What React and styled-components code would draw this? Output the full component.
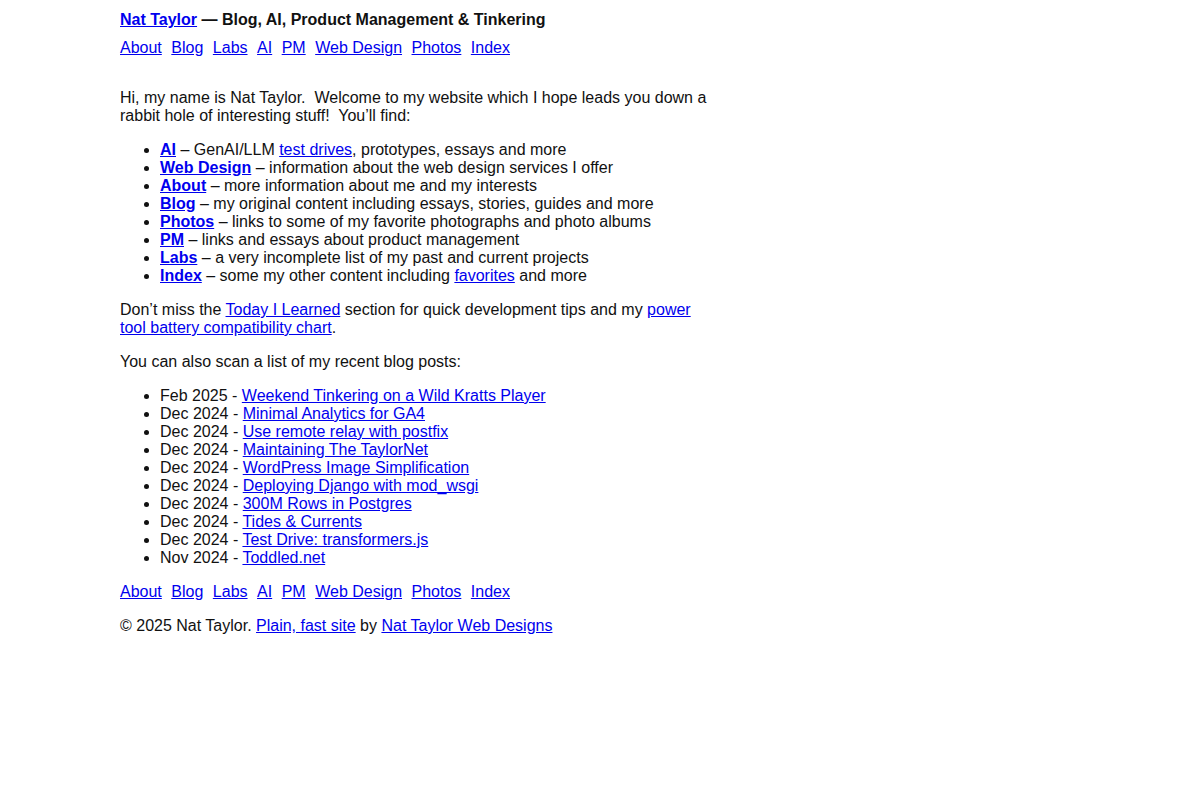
import styled, { createGlobalStyle } from 'styled-components';

const GlobalStyle = createGlobalStyle`
  body {
    margin: 0;
    background: #fff;
    color: #111;
    font-family: "Liberation Sans", Arial, sans-serif;
    font-size: 16px;
    line-height: 18px;
  }

  a {
    color: #0000ee;
    text-decoration: underline;
  }
`;

const Page = styled.div`
  max-width: 960px;
  margin: 0 auto;
  padding-top: 11px;
`;

const Header = styled.header`
  margin-bottom: 10px;
`;

const Title = styled.h1`
  margin: 0;
  font-size: 16px;
  line-height: 18px;
  font-weight: bold;
`;

const Nav = styled.nav`
  display: flex;
  gap: 9.5px;
`;

const Main = styled.main`
  max-width: 600px;
  padding-top: 32px;
`;

const Para = styled.p`
  margin: 0 0 16px;
`;

const List = styled.ul`
  margin: 0 0 16px;
  padding-left: 40px;
`;

const Strong = styled.a`
  font-weight: bold;
`;

const Footer = styled.footer`
  padding-top: 0;
`;

const Copy = styled.p`
  margin: 16px 0 0;
`;

const navLinks = ['About', 'Blog', 'Labs', 'AI', 'PM', 'Web Design', 'Photos', 'Index'];

const sections = [
  ['AI', <> – GenAI/LLM <a href="#">test drives</a>, prototypes, essays and more</>],
  ['Web Design', ' – information about the web design services I offer'],
  ['About', ' – more information about me and my interests'],
  ['Blog', ' – my original content including essays, stories, guides and more'],
  ['Photos', ' – links to some of my favorite photographs and photo albums'],
  ['PM', ' – links and essays about product management'],
  ['Labs', ' – a very incomplete list of my past and current projects'],
  ['Index', <> – some my other content including <a href="#">favorites</a> and more</>]
];

const posts = [
  ['Feb 2025', 'Weekend Tinkering on a Wild Kratts Player'],
  ['Dec 2024', 'Minimal Analytics for GA4'],
  ['Dec 2024', 'Use remote relay with postfix'],
  ['Dec 2024', 'Maintaining The TaylorNet'],
  ['Dec 2024', 'WordPress Image Simplification'],
  ['Dec 2024', 'Deploying Django with mod_wsgi'],
  ['Dec 2024', '300M Rows in Postgres'],
  ['Dec 2024', 'Tides & Currents'],
  ['Dec 2024', 'Test Drive: transformers.js'],
  ['Nov 2024', 'Toddled.net']
];

const SiteNav = () => (
  <Nav>
    {navLinks.map((label) => (
      <a key={label} href="#">{label}</a>
    ))}
  </Nav>
);

const App = () => {
  return (
    <Page>
      <GlobalStyle />
      <Header>
        <Title>
          <a href="#">Nat Taylor</a> — Blog, AI, Product Management &amp; Tinkering
        </Title>
      </Header>
      <SiteNav />
      <Main>
        <Para>
          Hi, my name is Nat Taylor.&nbsp; Welcome to my website which I hope leads you down a
          rabbit hole of interesting stuff!&nbsp; You’ll find:
        </Para>
        <List>
          {sections.map(([label, text]) => (
            <li key={label}>
              <Strong href="#">{label}</Strong>
              {text}
            </li>
          ))}
        </List>
        <Para>
          Don’t miss the <a href="#">Today I Learned</a> section for quick development tips and my{' '}
          <a href="#">power tool battery compatibility chart</a>.
        </Para>
        <Para>You can also scan a list of my recent blog posts:</Para>
        <List>
          {posts.map(([date, title], index) => (
            <li key={index}>
              {date} - <a href="#">{title}</a>
            </li>
          ))}
        </List>
        <Footer>
          <SiteNav />
          <Copy>
            © 2025 Nat Taylor. <a href="#">Plain, fast site</a> by{' '}
            <a href="#">Nat Taylor Web Designs</a>
          </Copy>
        </Footer>
      </Main>
    </Page>
  );
};

export default App;
